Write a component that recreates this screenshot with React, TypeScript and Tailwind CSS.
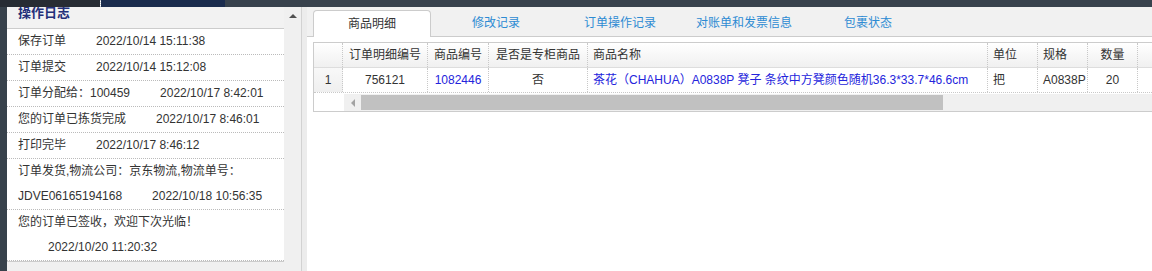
import React from "react";

const logs = [
  { text: "保存订单", time: "2022/10/14 15:11:38" },
  { text: "订单提交", time: "2022/10/14 15:12:08" },
  { text: "订单分配给：100459", time: "2022/10/17 8:42:01" },
  { text: "您的订单已拣货完成", time: "2022/10/17 8:46:01" },
  { text: "打印完毕", time: "2022/10/17 8:46:12" },
];

const tabs = ["商品明细", "修改记录", "订单操作记录", "对账单和发票信息", "包裹状态"];

const cell = "h-full flex items-center border-r border-dotted border-[#c8c8c8] shrink-0";

const LogPanel = () => {
  return (
    <div className="w-[277px] shrink-0 flex flex-col bg-[#f0f0f0]">
      <div className="h-[22px] shrink-0 overflow-hidden border-b border-[#cccccc] bg-[#f2f2f2] pl-[11px]">
        <div className="-mt-[1px] text-[13px] leading-[13px] font-bold text-[#24307a]">操作日志</div>
      </div>
      <div className="bg-white border-b border-[#cccccc] text-[12px] text-[#333]">
        {logs.map((l) => (
          <div key={l.time} className="h-[26px] leading-[25px] pl-[11px] border-b border-dotted border-[#bbbbbb] whitespace-nowrap">
            {l.text}
            <span className="ml-[30px]">{l.time}</span>
          </div>
        ))}
        <div className="h-[51px] leading-[25px] pl-[11px] border-b border-dotted border-[#bbbbbb] whitespace-nowrap">
          <div>订单发货,物流公司：京东物流,物流单号：</div>
          <div>
            JDVE06165194168<span className="ml-[30px]">2022/10/18 10:56:35</span>
          </div>
        </div>
        <div className="h-[51px] leading-[25px] pl-[11px] border-b border-dotted border-[#bbbbbb] whitespace-nowrap">
          <div>您的订单已签收，欢迎下次光临！</div>
          <div className="pl-[30px]">2022/10/20 11:20:32</div>
        </div>
      </div>
    </div>
  );
};

const Grid = () => {
  return (
    <div className="w-[900px] mt-[5px] border border-[#cccccc] text-[12px] text-[#333] bg-white">
      {/* header */}
      <div className="h-[25px] flex border-b border-[#dddddd] bg-gradient-to-b from-white to-[#f0f0f0]">
        <div className={`${cell} w-[29px]`}></div>
        <div className={`${cell} w-[85px] justify-center`}>订单明细编号</div>
        <div className={`${cell} w-[61px] justify-center`}>商品编号</div>
        <div className={`${cell} w-[99px] justify-center`}>是否是专柜商品</div>
        <div className={`${cell} w-[400px] pl-[5px]`}>商品名称</div>
        <div className={`${cell} w-[50px] pl-[5px]`}>单位</div>
        <div className={`${cell} w-[50px] pl-[5px]`}>规格</div>
        <div className={`${cell} w-[50px] justify-center`}>数量</div>
        <div className={`${cell} w-[60px]`}></div>
      </div>
      {/* row */}
      <div className="h-[25px] flex border-b border-dotted border-[#c8c8c8]">
        <div className={`${cell} w-[29px] justify-center bg-gradient-to-b from-[#f8f8f8] to-[#efefef]`}>1</div>
        <div className={`${cell} w-[85px] justify-center`}>756121</div>
        <div className={`${cell} w-[61px] justify-center text-[#2424dc]`}>1082446</div>
        <div className={`${cell} w-[99px] justify-center`}>否</div>
        <div className={`${cell} w-[400px] pl-[5px] text-[#2424dc] whitespace-nowrap`}>
          茶花（CHAHUA）A0838P 凳子 条纹中方凳颜色随机36.3*33.7*46.6cm
        </div>
        <div className={`${cell} w-[50px] pl-[5px]`}>把</div>
        <div className={`${cell} w-[50px] pl-[5px]`}>A0838P</div>
        <div className={`${cell} w-[50px] justify-center`}>20</div>
        <div className={`${cell} w-[60px]`}></div>
      </div>
      {/* horizontal scrollbar */}
      <div className="h-[17px] flex mt-[1px]">
        <div className="w-[30px] shrink-0 bg-white"></div>
        <div className="w-[17px] shrink-0 bg-[#f0f0f0] flex items-center justify-center">
          <div className="w-0 h-0 border-y-[4px] border-y-transparent border-r-[4px] border-r-[#a3a3a3]"></div>
        </div>
        <div className="flex-1 bg-[#f0f0f0] py-[1px]">
          <div className="w-[582px] h-full bg-[#c1c1c1]"></div>
        </div>
      </div>
    </div>
  );
};

export default function App() {
  return (
    <div
      className="w-[1152px] h-[271px] overflow-hidden flex flex-col bg-white"
      style={{ fontFamily: '"Liberation Sans", "Noto Sans CJK SC", sans-serif' }}
    >
      {/* top bar */}
      <div className="h-[7px] shrink-0 flex">
        <div className="w-[100px] bg-[#272c34]"></div>
        <div className="w-[1px] border-l border-dotted border-[#c8ccd2]"></div>
        <div className="w-[124px] bg-[#1b2c4e]"></div>
        <div className="flex-1 bg-[#38424d]"></div>
      </div>

      <div className="flex-1 flex min-h-0">
        <div className="w-[7px] shrink-0 bg-[#37414b]"></div>
        <LogPanel />

        {/* scroll gutter */}
        <div className="w-[17px] shrink-0 bg-[#f0f0f0] flex justify-center pt-[7px]">
          <div className="w-0 h-0 border-x-[4px] border-x-transparent border-b-[4px] border-b-[#505050]"></div>
        </div>
        <div className="w-[6px] shrink-0 border-l border-[#d2d2d2] bg-[#ececec]"></div>

        {/* right panel */}
        <div className="flex-1 min-w-0 overflow-hidden flex flex-col">
          <div className="h-[30px] shrink-0 flex items-end bg-[#f1f1f1] border-b border-[#cccccc] pl-[6px]">
            {tabs.map((t, i) =>
              i === 0 ? (
                <div
                  key={t}
                  className="w-[118px] h-[27px] -mb-px mr-[3px] flex items-center justify-center bg-white border border-b-0 border-[#cccccc] rounded-t-[4px] text-[12px] text-[#333]"
                >
                  {t}
                </div>
              ) : (
                <div key={t} className="w-[124px] h-[27px] flex items-center justify-center text-[12px] text-[#2d8bd3] whitespace-nowrap">
                  {t}
                </div>
              )
            )}
          </div>
          <div className="pl-[6px]">
            <Grid />
          </div>
        </div>
      </div>
    </div>
  );
}
